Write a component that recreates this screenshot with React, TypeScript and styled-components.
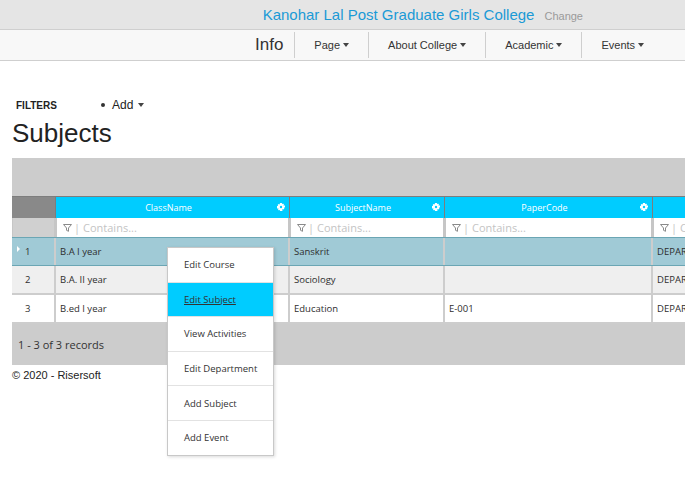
import React from 'react';
import styled, { createGlobalStyle } from 'styled-components';

const GlobalStyle = createGlobalStyle`
  html, body { margin: 0; padding: 0; background: #fff; }
  body { font-family: "Liberation Sans", Arial, sans-serif; color: #333; min-height: 503px; }
`;

const Shell = styled.div`
  min-height: 503px;
  overflow-x: hidden;
`;

const TopBar = styled.div`
  height: 29px;
  background: #e5e5e5;
  display: flex;
  align-items: flex-end;
  justify-content: flex-end;
  padding: 0 102px 5px 0;
  box-sizing: border-box;
  gap: 10px;
`;

const Title = styled.span`
  font-size: 15px;
  color: #1b9ad6;
  line-height: 18px;
`;

const ChangeLink = styled.span`
  font-size: 11px;
  color: #9a9a9a;
  line-height: 16px;
`;

const NavBar = styled.nav`
  height: 32px;
  box-sizing: border-box;
  background: #f8f8f8;
  border-top: 1px solid #cfcfcf;
  border-bottom: 1px solid #cfcfcf;
  display: flex;
  padding-left: 243px;
  white-space: nowrap;
  overflow: hidden;
`;

const Brand = styled.span`
  font-size: 17px;
  padding: 0 11px 0 12px;
  line-height: 30px;
  color: #333;
`;

const NavItem = styled.span`
  display: flex;
  align-items: center;
  gap: 3px;
  padding: 0 19px;
  margin: 2px 0;
  font-size: 11px;
  color: #333;
  border-left: 1px solid #cfcfcf;
`;

const Caret = styled.span`
  display: inline-block;
  width: 0;
  height: 0;
  border-top: 4px solid #444;
  border-left: 3.5px solid transparent;
  border-right: 3.5px solid transparent;
`;

const Page = styled.div`
  padding: 0 12px;
`;

const FiltersBar = styled.div`
  margin-top: 37px;
  padding-left: 4px;
  display: flex;
  align-items: center;
  height: 14px;
`;

const FiltersLabel = styled.span`
  width: 85px;
  font-size: 10px;
  font-weight: bold;
  color: #222;
`;

const AddMenu = styled.span`
  display: flex;
  align-items: center;
  gap: 5px;
  font-size: 12px;
  color: #222;
`;

const Bullet = styled.span`
  width: 4px;
  height: 4px;
  border-radius: 50%;
  background: #333;
  margin-right: 2px;
`;

const Heading = styled.h1`
  margin: 4px 0 8px;
  font-size: 26px;
  font-weight: normal;
  line-height: 34px;
  color: #222;
`;

const GridArea = styled.div`
  position: relative;
`;

const GridViewport = styled.div`
  margin-right: -12px;
  overflow: hidden;
`;

const Grid = styled.div`
  width: 900px;
  font-family: "Open Sans", "Noto Sans", sans-serif;
`;

const GroupPanel = styled.div`
  height: 38px;
  background: #cccccc;
`;

const cols = '44px 234px 155px 208px 259px';

const HeaderRow = styled.div`
  display: grid;
  grid-template-columns: ${cols};
  height: 22px;
  box-sizing: border-box;
  border-top: 1px solid #7d7d7d;
  background: #00ccff;
`;

const HeaderCell = styled.div<{ $indicator?: boolean }>`
  position: relative;
  display: flex;
  align-items: center;
  justify-content: center;
  padding-right: 8px;
  font-size: 9px;
  color: #fff;
  background: ${(p) => (p.$indicator ? '#898989' : '#00ccff')};
  border-right: 1px solid #7d7d7d;
`;

const GearSlot = styled.span`
  position: absolute;
  right: 4px;
  top: 6px;
  width: 8px;
  height: 8px;
  display: flex;
`;

const FilterRow = styled.div`
  display: grid;
  grid-template-columns: ${cols};
  height: 19px;
  background: #cfcfcf;
`;

const FilterCell = styled.div<{ $indicator?: boolean }>`
  display: flex;
  align-items: center;
  gap: 2px;
  padding-left: 6px;
  background: ${(p) => (p.$indicator ? '#d0d0d0' : '#fff')};
  border-left: 1px solid #c6c6c6;
  border-right: 2px solid #c6c6c6;
  font-size: 11px;
  color: #c4c4c4;
  overflow: hidden;
  white-space: nowrap;
`;

const Pipe = styled.span`
  color: #c4c4c4;
  margin-right: 1px;
`;

type RowKind = 'selected' | 'alt' | 'plain';

const rowBg: Record<RowKind, string> = {
  selected: '#a0cad6',
  alt: '#efefef',
  plain: '#ffffff',
};

const DataRow = styled.div<{ $kind: RowKind }>`
  display: grid;
  grid-template-columns: ${cols};
  height: 29px;
  box-sizing: border-box;
  background: ${(p) => rowBg[p.$kind]};
  border-top: ${(p) => (p.$kind === 'selected' ? '1px solid #6ba6b4' : 'none')};
  border-bottom: ${(p) => (p.$kind === 'selected' ? '1px solid #6ba6b4' : '2px solid #cdcdcd')};
`;

const DataCell = styled.div`
  display: flex;
  align-items: center;
  padding-left: 4px;
  font-size: 9.5px;
  color: #2e2e2e;
  border-right: 2px solid #cdcdcd;
  white-space: nowrap;
  overflow: hidden;
`;

const IndicatorCell = styled.div`
  display: flex;
  align-items: center;
  padding-left: 5px;
  font-size: 9.5px;
  color: #2e2e2e;
  border-right: 2px solid #cdcdcd;
`;

const ArrowSlot = styled.span`
  width: 8px;
  display: flex;
  align-items: center;
`;

const Arrow = styled.span`
  width: 0;
  height: 0;
  border-left: 3px solid #fff;
  border-top: 3px solid transparent;
  border-bottom: 3px solid transparent;
  margin-top: -6px;
`;

const Footer = styled.div`
  height: 41px;
  background: #cccccc;
  display: flex;
  align-items: center;
  padding-left: 6px;
  font-size: 11px;
  color: #333;
`;

const Copyright = styled.div`
  margin-top: 4px;
  font-size: 11px;
  color: #222;
`;

const ContextMenu = styled.ul`
  position: absolute;
  left: 155px;
  top: 89px;
  width: 105px;
  margin: 0;
  padding: 0;
  list-style: none;
  background: #fff;
  border: 1px solid #c8c8c8;
  box-shadow: 1px 1px 3px rgba(0, 0, 0, 0.15);
  font-family: "Open Sans", "Noto Sans", sans-serif;
  z-index: 2;
`;

const MenuItem = styled.li<{ $active?: boolean }>`
  height: 33.6px;
  display: flex;
  align-items: center;
  padding-left: 16px;
  font-size: 9.5px;
  color: #333;
  background: ${(p) => (p.$active ? '#00ccff' : '#fff')};
  text-decoration: ${(p) => (p.$active ? 'underline' : 'none')};
  border-bottom: 1px solid #e2e2e2;
  &:last-child { border-bottom: none; }
`;

const Gear = () => (
  <svg width="8" height="8" viewBox="0 0 8 8">
    <path
      d="M3 0h2v1.2l1-0.6 1 1-0.6 1H8v2H6.8l0.6 1-1 1-1-0.6V8H3V6.8l-1 0.6-1-1 0.6-1H0V3h1.2l-0.6-1 1-1 1 0.6z"
      fill="#fff"
    />
    <circle cx="4" cy="4" r="1.2" fill="#00ccff" />
  </svg>
);

const Funnel = () => (
  <svg width="9" height="8" viewBox="0 0 9 8">
    <path d="M0.5 0.5h8L5.5 4v3.3L3.5 6.3V4z" fill="none" stroke="#8a8a8a" strokeWidth="1" />
  </svg>
);

const columns = ['ClassName', 'SubjectName', 'PaperCode', ''];

const rows: { kind: RowKind; n: number; cells: string[] }[] = [
  { kind: 'selected', n: 1, cells: ['B.A I year', 'Sanskrit', '', 'DEPARTMENT'] },
  { kind: 'alt', n: 2, cells: ['B.A. II year', 'Sociology', '', 'DEPARTMENT'] },
  { kind: 'plain', n: 3, cells: ['B.ed I year', 'Education', 'E-001', 'DEPARTMENT'] },
];

const menu = ['Edit Course', 'Edit Subject', 'View Activities', 'Edit Department', 'Add Subject', 'Add Event'];

export default function App() {
  return (
    <Shell>
      <GlobalStyle />
      <TopBar>
        <Title>Kanohar Lal Post Graduate Girls College</Title>
        <ChangeLink>Change</ChangeLink>
      </TopBar>
      <NavBar>
        <Brand>Info</Brand>
        {['Page', 'About College', 'Academic', 'Events'].map((t) => (
          <NavItem key={t}>
            {t} <Caret />
          </NavItem>
        ))}
      </NavBar>
      <Page>
        <FiltersBar>
          <FiltersLabel>FILTERS</FiltersLabel>
          <AddMenu>
            <Bullet />
            Add
            <Caret />
          </AddMenu>
        </FiltersBar>
        <Heading>Subjects</Heading>
        <GridArea>
          <GridViewport>
            <Grid>
              <GroupPanel />
              <HeaderRow>
                <HeaderCell $indicator />
                {columns.map((c, i) => (
                  <HeaderCell key={i}>
                    {c}
                    {c && (
                      <GearSlot>
                        <Gear />
                      </GearSlot>
                    )}
                  </HeaderCell>
                ))}
              </HeaderRow>
              <FilterRow>
                <FilterCell $indicator />
                {columns.map((_, i) => (
                  <FilterCell key={i}>
                    <Funnel />
                    <Pipe>|</Pipe>
                    Contains...
                  </FilterCell>
                ))}
              </FilterRow>
              {rows.map((r) => (
                <DataRow key={r.n} $kind={r.kind}>
                  <IndicatorCell>
                    <ArrowSlot>{r.kind === 'selected' && <Arrow />}</ArrowSlot>
                    {r.n}
                  </IndicatorCell>
                  {r.cells.map((c, i) => (
                    <DataCell key={i}>{c}</DataCell>
                  ))}
                </DataRow>
              ))}
              <Footer>1 - 3 of 3 records</Footer>
            </Grid>
          </GridViewport>
          <ContextMenu>
            {menu.map((m, i) => (
              <MenuItem key={m} $active={i === 1}>
                {m}
              </MenuItem>
            ))}
          </ContextMenu>
        </GridArea>
        <Copyright>© 2020 - Risersoft</Copyright>
      </Page>
    </Shell>
  );
}
